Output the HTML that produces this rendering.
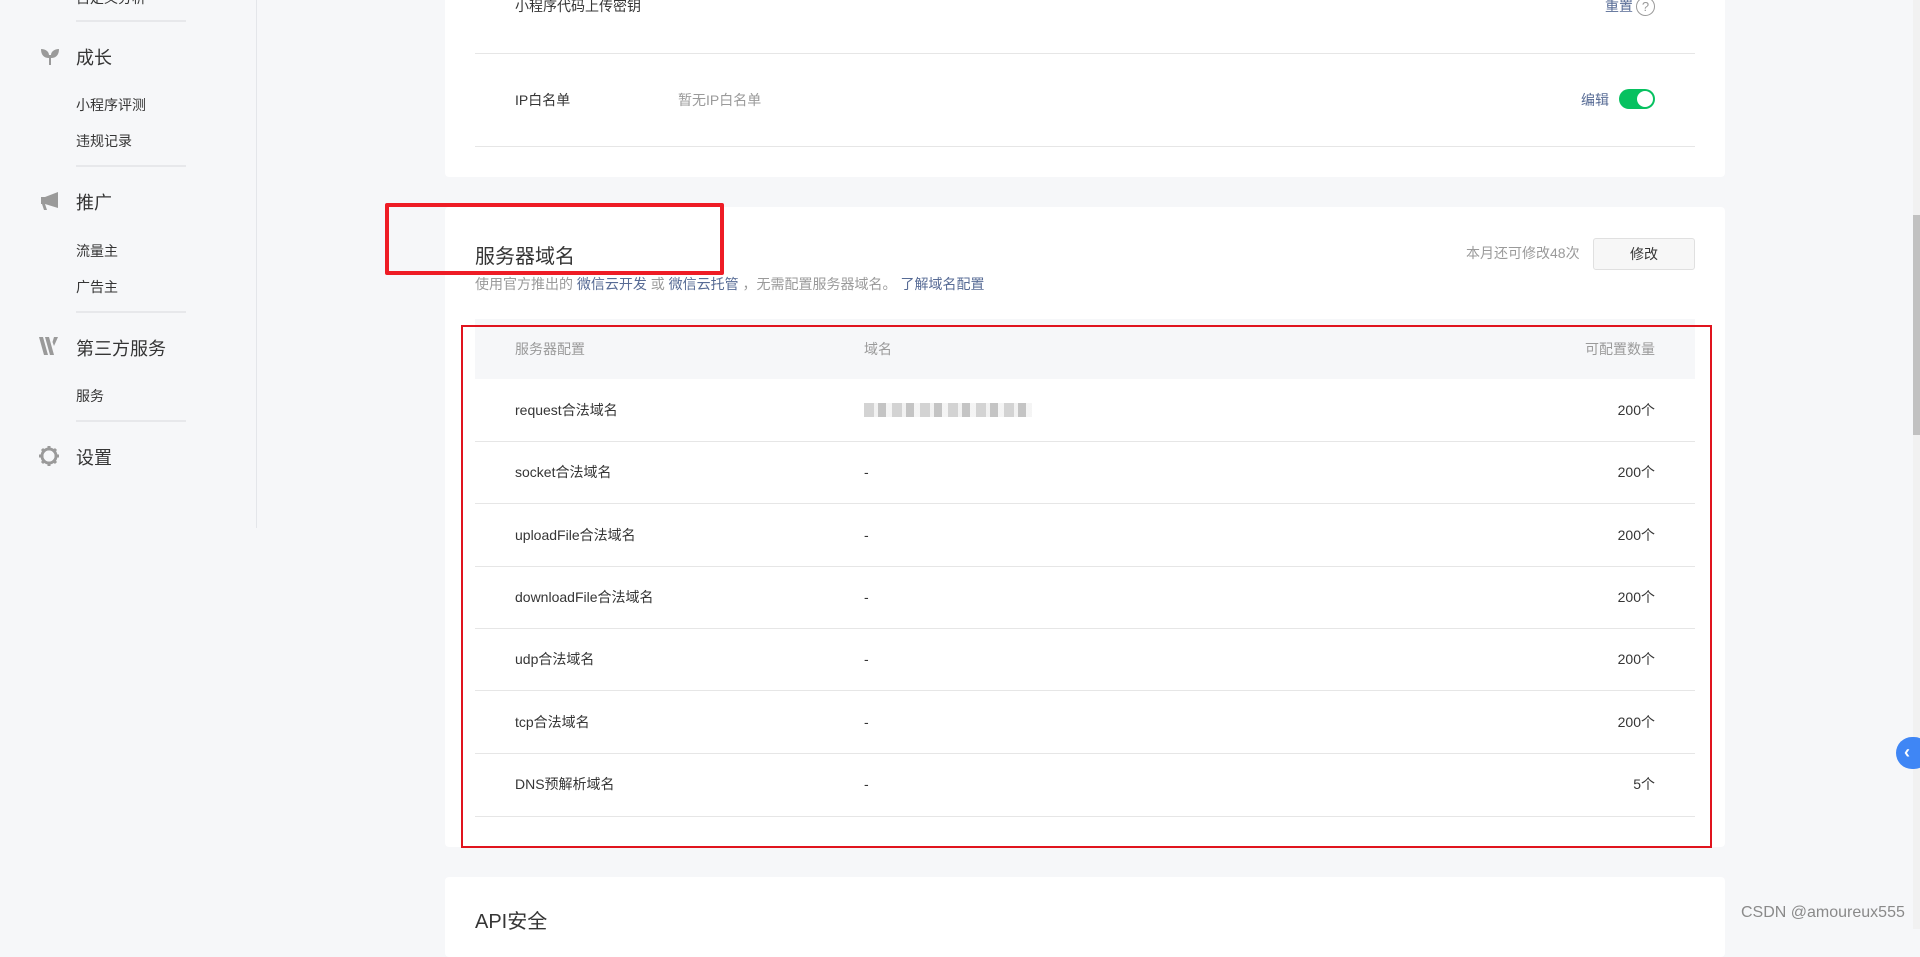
<!DOCTYPE html>
<html><head><meta charset="utf-8"><style>
*{margin:0;padding:0;box-sizing:border-box}
body{width:1920px;height:929px;overflow:hidden;background:#f6f7f9;font-family:"Liberation Sans","Noto Sans CJK SC",sans-serif;color:#353535;position:relative;font-size:14px}
.a{position:absolute;white-space:nowrap}
.side{position:absolute;left:0;top:0;width:257px;height:528px;border-right:1px solid #e4e6ea;background:#f6f7f9}
.hr{position:absolute;left:76px;width:110px;height:2px;background:#e7e8eb}
.card{position:absolute;left:445px;width:1280px;background:#fff;border-radius:4px}
.line{position:absolute;left:475px;width:1220px;height:1px;background:#e6e6e6}
.t{font-size:14px;line-height:20px;color:#353535}
.g{color:#9a9a9a}
.lk{color:#576b95}
</style></head><body>
<div class="side"></div>
<div class="a t" style="left:76px;top:-12px">自定义分析</div>
<div class="hr" style="top:20px"></div>
<svg class="a" style="left:40px;top:48px" width="20" height="18" viewBox="0 0 20 18"><path d="M1 1c0 6 3 9 8 9v7h2v-7c5 0 8-3 8-9-5 0-8 3-8 6h-2C9 4 6 1 1 1z" fill="#9a9a9a"/></svg>
<div class="a" style="left:76px;top:44px;font-size:18px">成长</div>
<div class="a t" style="left:76px;top:95px">小程序评测</div>
<div class="a t" style="left:76px;top:131px">违规记录</div>
<div class="hr" style="top:165px"></div>
<svg class="a" style="left:40px;top:191px" width="20" height="20" viewBox="0 0 20 20"><path d="M1 6h4l13-5v16L5 13l2 6H4l-2-6H1z" fill="#9a9a9a"/></svg>
<div class="a" style="left:76px;top:189px;font-size:18px">推广</div>
<div class="a t" style="left:76px;top:241px">流量主</div>
<div class="a t" style="left:76px;top:277px">广告主</div>
<div class="hr" style="top:311px"></div>
<svg class="a" style="left:39px;top:337px" width="21" height="18" viewBox="0 0 21 18"><path d="M0 0h4l5 18H5zM6 0h4l5 18h-4zM15 0h4l-4 9-1.5-4z" fill="#9a9a9a"/></svg>
<div class="a" style="left:76px;top:335px;font-size:18px">第三方服务</div>
<div class="a t" style="left:76px;top:386px">服务</div>
<div class="hr" style="top:420px"></div>
<svg class="a" style="left:38px;top:445px" width="22" height="22" viewBox="0 0 22 22"><g stroke="#9a9a9a" stroke-width="3"><path d="M11 1v4M11 17v4M1 11h4M17 11h4M4 4l3 3M15 15l3 3M4 18l3-3M15 7l3-3"/></g><circle cx="11" cy="11" r="7" fill="none" stroke="#9a9a9a" stroke-width="3"/><circle cx="11" cy="11" r="5.5" fill="#f6f7f9"/></svg>
<div class="a" style="left:76px;top:444px;font-size:18px">设置</div>

<div class="card" style="top:-10px;height:187px"></div>
<div class="a t" style="left:515px;top:-4px">小程序代码上传密钥</div>
<div class="a t lk" style="left:1605px;top:-4px">重置</div>
<div class="a" style="left:1636px;top:-3px;width:19px;height:19px;border:1px solid #9a9a9a;border-radius:50%;color:#9a9a9a;font-size:13px;text-align:center;line-height:17px">?</div>
<div class="line" style="top:53px"></div>
<div class="a t" style="left:515px;top:90px">IP白名单</div>
<div class="a t g" style="left:678px;top:90px">暂无IP白名单</div>
<div class="a t lk" style="left:1581px;top:90px">编辑</div>
<div class="a" style="left:1619px;top:89px;width:36px;height:20px;border-radius:10px;background:#07c160"><div style="position:absolute;right:2px;top:2px;width:16px;height:16px;border-radius:50%;background:#fff"></div></div>
<div class="line" style="top:146px"></div>

<div class="card" style="top:207px;height:640px"></div>
<div class="a" style="left:475px;top:240px;font-size:20px;color:#353535">服务器域名</div>
<div class="a t g" style="left:475px;top:274px">使用官方推出的 <span class="lk">微信云开发</span> 或 <span class="lk">微信云托管</span> ，无需配置服务器域名。 <span class="lk">了解域名配置</span></div>
<div class="a t g" style="left:1466px;top:243px">本月还可修改48次</div>
<div class="a" style="left:1593px;top:238px;width:102px;height:32px;border:1px solid #e0e0e0;border-radius:3px;background:#f7f7f7;text-align:center;line-height:30px;font-size:14px">修改</div>
<div class="a" style="left:475px;top:319px;width:1220px;height:60px;background:#f6f7f9"></div>
<div class="a t g" style="left:515px;top:339px">服务器配置</div>
<div class="a t g" style="left:864px;top:339px">域名</div>
<div class="a t g" style="left:1555px;top:339px;width:100px;text-align:right">可配置数量</div>

<div class="a t" style="left:515px;top:400px">request合法域名</div>
<div class="a" style="left:864px;top:403px;width:168px;height:14px;background:repeating-linear-gradient(90deg,#c8c8c8 0 10px,#eee 10px 14px,#b5b5b5 14px 22px,#f2f2f2 22px 28px);opacity:.8"></div>
<div class="a t" style="left:1580px;top:400px;width:75px;text-align:right">200个</div>
<div class="line" style="top:441px"></div>
<div class="a t" style="left:515px;top:462px">socket合法域名</div><div class="a t" style="left:864px;top:462px">-</div><div class="a t" style="left:1580px;top:462px;width:75px;text-align:right">200个</div>
<div class="line" style="top:503px"></div>
<div class="a t" style="left:515px;top:525px">uploadFile合法域名</div><div class="a t" style="left:864px;top:525px">-</div><div class="a t" style="left:1580px;top:525px;width:75px;text-align:right">200个</div>
<div class="line" style="top:566px"></div>
<div class="a t" style="left:515px;top:587px">downloadFile合法域名</div><div class="a t" style="left:864px;top:587px">-</div><div class="a t" style="left:1580px;top:587px;width:75px;text-align:right">200个</div>
<div class="line" style="top:628px"></div>
<div class="a t" style="left:515px;top:649px">udp合法域名</div><div class="a t" style="left:864px;top:649px">-</div><div class="a t" style="left:1580px;top:649px;width:75px;text-align:right">200个</div>
<div class="line" style="top:690px"></div>
<div class="a t" style="left:515px;top:712px">tcp合法域名</div><div class="a t" style="left:864px;top:712px">-</div><div class="a t" style="left:1580px;top:712px;width:75px;text-align:right">200个</div>
<div class="line" style="top:753px"></div>
<div class="a t" style="left:515px;top:774px">DNS预解析域名</div><div class="a t" style="left:864px;top:774px">-</div><div class="a t" style="left:1580px;top:774px;width:75px;text-align:right">5个</div>
<div class="line" style="top:816px"></div>

<div class="a" style="left:461px;top:325px;width:1251px;height:523px;border:2px solid #e0141e"></div>
<div class="a" style="left:385px;top:203px;width:339px;height:72px;border:4px solid #ee1c25;border-radius:2px"></div>

<div class="card" style="top:877px;height:80px"></div>
<div class="a" style="left:475px;top:905px;font-size:20px">API安全</div>

<div class="a" style="left:1913px;top:0;width:7px;height:929px;background:#f1f1f1"></div>
<div class="a" style="left:1913px;top:215px;width:7px;height:220px;background:#c1c1c1"></div>
<div class="a" style="left:1896px;top:737px;width:34px;height:32px;border-radius:16px;background:#3f86f5;color:#fff;font-size:18px;font-weight:bold;line-height:30px;padding-left:8px">‹</div>
<div class="a" style="left:1741px;top:904px;font-size:16px;color:#8a8a8a">CSDN @amoureux555</div>
</body></html>
